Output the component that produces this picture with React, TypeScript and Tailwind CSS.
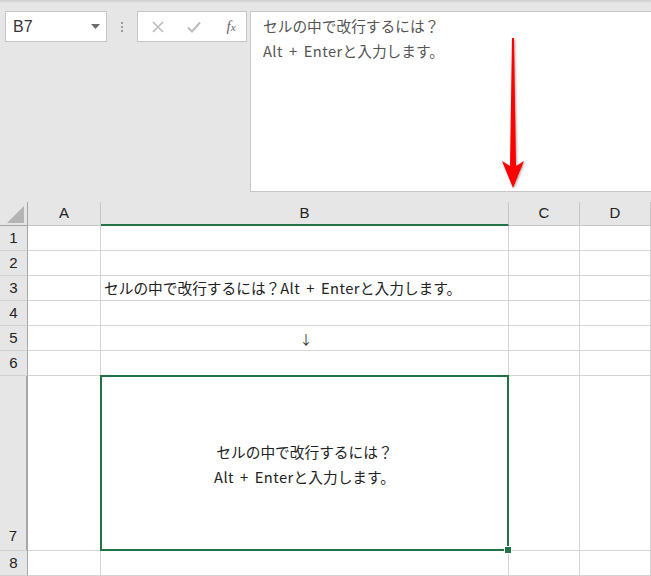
import React from 'react';

const jp = "font-['Noto_Sans_CJK_JP','Noto_Sans',sans-serif]";
const latin = "font-['Liberation_Sans','Noto_Sans',sans-serif]";
const cellLine = 'border-r border-b border-[#d4d4d4] bg-white';
const headCell = `flex items-center justify-center border-r border-b border-[#c6c6c6] bg-[#e6e6e6] text-[15px] text-[#222] ${latin}`;
const rowHead = `flex items-center justify-center border-r border-b border-r-[#a6a6a6] border-b-[#d0d0d0] bg-[#e6e6e6] text-[15px] text-[#222] ${latin}`;

const text1 = 'セルの中で改行するには？';

function Text2() {
  return (
    <>
      <span className="tracking-[0.4px] [word-spacing:2.5px]">Alt + Enter</span>と入力します。
    </>
  );
}

function RedArrow() {
  return (
    <svg
      width="30"
      height="156"
      viewBox="0 0 30 156"
      className="absolute left-[247px] top-[26px] drop-shadow-[1px_1px_1px_rgba(0,0,0,0.35)]"
    >
      <path d="M14 0 L16 0 L18 128 L26 123 L15 150 L4 123 L12 128 Z" fill="#ff0000" />
    </svg>
  );
}

function FormulaRow() {
  return (
    <div className="flex h-[199px] items-start pl-[5px] pt-[8px]">
      <div className="flex h-[31px] w-[102px] items-center justify-between border border-[#c6c6c6] bg-white pl-[7px] pr-[6px]">
        <span className={`text-[16px] text-[#333] ${latin}`}>B7</span>
        <svg width="9" height="5" viewBox="0 0 9 5">
          <path d="M0 0 L9 0 L4.5 5 Z" fill="#6b6b6b" />
        </svg>
      </div>
      <div className="flex h-[31px] w-[30px] flex-col items-center justify-center gap-[2px]">
        <span className="h-[2px] w-[2px] bg-[#9a9a9a]" />
        <span className="h-[2px] w-[2px] bg-[#9a9a9a]" />
        <span className="h-[2px] w-[2px] bg-[#9a9a9a]" />
      </div>
      <div className="flex h-[31px] w-[110px] items-center border border-[#c6c6c6] bg-white">
        <div className="flex w-[36px] justify-center pl-[4px]">
          <svg width="12" height="12" viewBox="0 0 12 12">
            <path d="M1 1 L11 11 M11 1 L1 11" stroke="#bcbcbc" strokeWidth="1.6" />
          </svg>
        </div>
        <div className="flex w-[36px] justify-center pl-[4px]">
          <svg width="14" height="12" viewBox="0 0 14 12">
            <path d="M1 6.5 L5 10.5 L13 1.5" stroke="#bcbcbc" strokeWidth="2" fill="none" />
          </svg>
        </div>
        <div className="flex w-[36px] justify-center pl-[6px]">
          <span className="font-['Liberation_Serif',serif] text-[15px] italic leading-none text-[#666]">
            f<span className="text-[11px]">x</span>
          </span>
        </div>
      </div>
      <div className="relative ml-[3px] h-[181px] flex-1 border border-r-0 border-[#c6c6c6] bg-white pl-[12px] pt-[1px]">
        <div className={`text-[14.7px] leading-[25px] text-[#555] ${jp}`}>{text1}</div>
        <div className={`text-[14.7px] leading-[25px] text-[#555] ${jp}`}>
          <Text2 />
        </div>
        <RedArrow />
      </div>
    </div>
  );
}

function Sheet() {
  const rows = [1, 2, 3, 4, 5, 6];
  return (
    <div className="grid grid-cols-[28px_73px_408px_71px_71px] grid-rows-[24px_repeat(6,25px)_175px_25px]">
      <div className="flex items-end justify-end border-r border-b border-[#a6a6a6] bg-[#e6e6e6] pb-[2px] pr-[3px]">
        <svg width="17" height="17" viewBox="0 0 17 17">
          <path d="M17 0 L17 17 L0 17 Z" fill="#b4b4b4" />
        </svg>
      </div>
      <div className={headCell}>A</div>
      <div className={`${headCell} border-b-2 border-b-[#217346] bg-[#d2d2d2] text-[#1e5c3b]`}>B</div>
      <div className={headCell}>C</div>
      <div className={headCell}>D</div>

      {rows.map((r) => (
        <React.Fragment key={r}>
          <div className={rowHead}>{r}</div>
          <div className={cellLine} />
          <div className={`${cellLine} flex items-center overflow-visible whitespace-nowrap pl-[3px] pt-[1px] text-[14.7px] text-[#222] ${jp}`}>
            {r === 3 && (
              <span>
                {text1}
                <Text2 />
              </span>
            )}
            {r === 5 && <span className="w-full text-center text-[13px] text-[#333]">↓</span>}
          </div>
          <div className={cellLine} />
          <div className={cellLine} />
        </React.Fragment>
      ))}

      <div className={`${rowHead} items-end border-r-2 border-r-[#217346] bg-[#d2d2d2] pb-[3px] text-[#1e5c3b]`}>7</div>
      <div className={cellLine} />
      <div className={`${cellLine} relative flex flex-col items-center justify-center pt-[1px] text-[14.7px] leading-[25px] text-[#222] ${jp}`}>
        <div>{text1}</div>
        <div>
          <Text2 />
        </div>
        <div className="absolute top-[-1px] left-[-1px] right-[-1px] bottom-[-1px] z-10 border-2 border-[#217346]" />
        <div className="absolute right-[-4px] bottom-[-4px] z-20 h-[8px] w-[8px] border border-white bg-[#217346]" />
      </div>
      <div className={cellLine} />
      <div className={cellLine} />

      <div className={rowHead}>8</div>
      <div className={cellLine} />
      <div className={cellLine} />
      <div className={cellLine} />
      <div className={cellLine} />
    </div>
  );
}

export default function App() {
  return (
    <div className="h-[576px] w-[651px] overflow-hidden bg-[#e6e6e6]">
      <div className="h-[3px] bg-gradient-to-b from-[#cdcdcd] to-[#e6e6e6]" />
      <FormulaRow />
      <Sheet />
    </div>
  );
}
